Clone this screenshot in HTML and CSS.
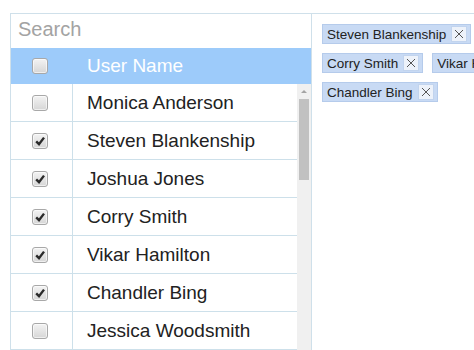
FILE: index.html
```html
<!DOCTYPE html>
<html lang="en">
<head>
    <meta charset="UTF-8">
    <meta name="viewport" content="width=device-width, initial-scale=1.0">
    <title>User picker</title>
    <link rel="stylesheet" href="styles.css">
</head>
<body>
    <div class="picker">
        <!-- left: searchable list -->
        <div class="list">
            <input class="search" type="text" placeholder="Search">
            <div class="head">
                <span class="head-check"><span class="box"></span></span>
                <span class="head-name">User Name</span>
            </div>
            <div class="body">
                <div class="rows">
                    <div class="row">
                        <span class="check"><span class="box"></span></span>
                        <span class="name">Monica Anderson</span>
                    </div>
                    <div class="row">
                        <span class="check"><span class="box on"><svg viewBox="0 0 14 14"><path d="M3.2 7.4 L6 10.2 L11 3.6"/></svg></span></span>
                        <span class="name">Steven Blankenship</span>
                    </div>
                    <div class="row">
                        <span class="check"><span class="box on"><svg viewBox="0 0 14 14"><path d="M3.2 7.4 L6 10.2 L11 3.6"/></svg></span></span>
                        <span class="name">Joshua Jones</span>
                    </div>
                    <div class="row">
                        <span class="check"><span class="box on"><svg viewBox="0 0 14 14"><path d="M3.2 7.4 L6 10.2 L11 3.6"/></svg></span></span>
                        <span class="name">Corry Smith</span>
                    </div>
                    <div class="row">
                        <span class="check"><span class="box on"><svg viewBox="0 0 14 14"><path d="M3.2 7.4 L6 10.2 L11 3.6"/></svg></span></span>
                        <span class="name">Vikar Hamilton</span>
                    </div>
                    <div class="row">
                        <span class="check"><span class="box on"><svg viewBox="0 0 14 14"><path d="M3.2 7.4 L6 10.2 L11 3.6"/></svg></span></span>
                        <span class="name">Chandler Bing</span>
                    </div>
                    <div class="row">
                        <span class="check"><span class="box"></span></span>
                        <span class="name">Jessica Woodsmith</span>
                    </div>
                </div>
                <div class="scrollbar">
                    <span class="arrow"></span>
                    <span class="thumb"></span>
                </div>
            </div>
        </div>

        <!-- right: chosen users -->
        <div class="chosen">
            <span class="tag">Steven Blankenship<span class="x"><svg viewBox="0 0 14 14"><path d="M3 3 L11 11 M11 3 L3 11"/></svg></span></span>
            <span class="tag">Corry Smith<span class="x"><svg viewBox="0 0 14 14"><path d="M3 3 L11 11 M11 3 L3 11"/></svg></span></span>
            <span class="tag">Vikar Hamilton<span class="x"><svg viewBox="0 0 14 14"><path d="M3 3 L11 11 M11 3 L3 11"/></svg></span></span>
            <span class="tag">Chandler Bing<span class="x"><svg viewBox="0 0 14 14"><path d="M3 3 L11 11 M11 3 L3 11"/></svg></span></span>
        </div>
    </div>
</body>
</html>
```

FILE: styles.css
```css
/* base */
html, body {
    overflow: hidden;
}

body {
    margin: 0;
    background: #fff;
    font-family: "Liberation Sans", Arial, sans-serif;
    color: #222;
}

/* widget frame */
.picker {
    display: flex;
    align-items: flex-start;
    margin: 13px 0 0 10px;
    border-top: 1px solid #cfe0ea;
    border-left: 1px solid #cfe0ea;
    width: 620px;
}

.list {
    width: 300px;
    border-right: 1px solid #cfe0ea;
    flex: none;
}

.search {
    display: block;
    box-sizing: border-box;
    width: 100%;
    height: 34px;
    margin: 0;
    padding: 0 0 3px 7px;
    border: none;
    outline: none;
    font-family: "Liberation Sans", Arial, sans-serif;
    font-size: 20px;
    color: #222;
}

.search::placeholder {
    color: #a3a3a3;
}

/* header row */
.head {
    display: flex;
    align-items: center;
    height: 36px;
    background: #9dcbfa;
    color: #fff;
    font-size: 19px;
}

.head-check {
    width: 58px;
    padding-right: 4px;
    display: flex;
    justify-content: center;
}

.head-name {
    padding-left: 14px;
}

/* rows */
.body {
    display: flex;
}

.rows {
    flex: 1;
}

.row {
    display: flex;
    align-items: center;
    height: 37px;
    border-bottom: 1px solid #cde0ea;
    font-size: 19px;
}

.check {
    width: 58px;
    padding-right: 3px;
    height: 100%;
    border-right: 1px solid #cde0ea;
    display: flex;
    align-items: center;
    justify-content: center;
}

.name {
    padding-left: 14px;
}

/* checkbox */
.box {
    width: 14px;
    height: 14px;
    border: 1px solid #a8a8a8;
    border-radius: 3px;
    background: linear-gradient(#f3f3f3, #d6d6d6);
    box-shadow: inset 0 0 0 1px rgba(255,255,255,0.6);
    display: flex;
}

.box svg {
    width: 14px;
    height: 14px;
}

.box svg path {
    fill: none;
    stroke: #2a2a2a;
    stroke-width: 2.4;
}

/* fake scrollbar */
.scrollbar {
    width: 14px;
    background: #f0f0f0;
    position: relative;
}

.arrow {
    position: absolute;
    left: 4px;
    top: 6px;
    border-left: 3px solid transparent;
    border-right: 3px solid transparent;
    border-bottom: 3px solid #a3a3a3;
}

.thumb {
    position: absolute;
    left: 2px;
    top: 15px;
    width: 10px;
    height: 81px;
    background: #c1c1c1;
}

/* chosen tags */
.chosen {
    width: 236px;
    padding: 10px;
    display: flex;
    flex-wrap: wrap;
    gap: 9px 9px;
}

.tag {
    display: inline-flex;
    align-items: center;
    height: 18px;
    padding: 0 3px 0 4px;
    background: #c8daf4;
    border: 1px solid #b5cbeb;
    font-size: 13.5px;
    color: #222;
    white-space: nowrap;
}

.x {
    display: inline-flex;
    margin-left: 5px;
    width: 14px;
    height: 14px;
    background: #edf2fa;
    border: 1px solid #c2d4ee;
}

.x svg {
    width: 14px;
    height: 14px;
}

.x svg path {
    stroke: #555;
    stroke-width: 1;
    fill: none;
}
```
